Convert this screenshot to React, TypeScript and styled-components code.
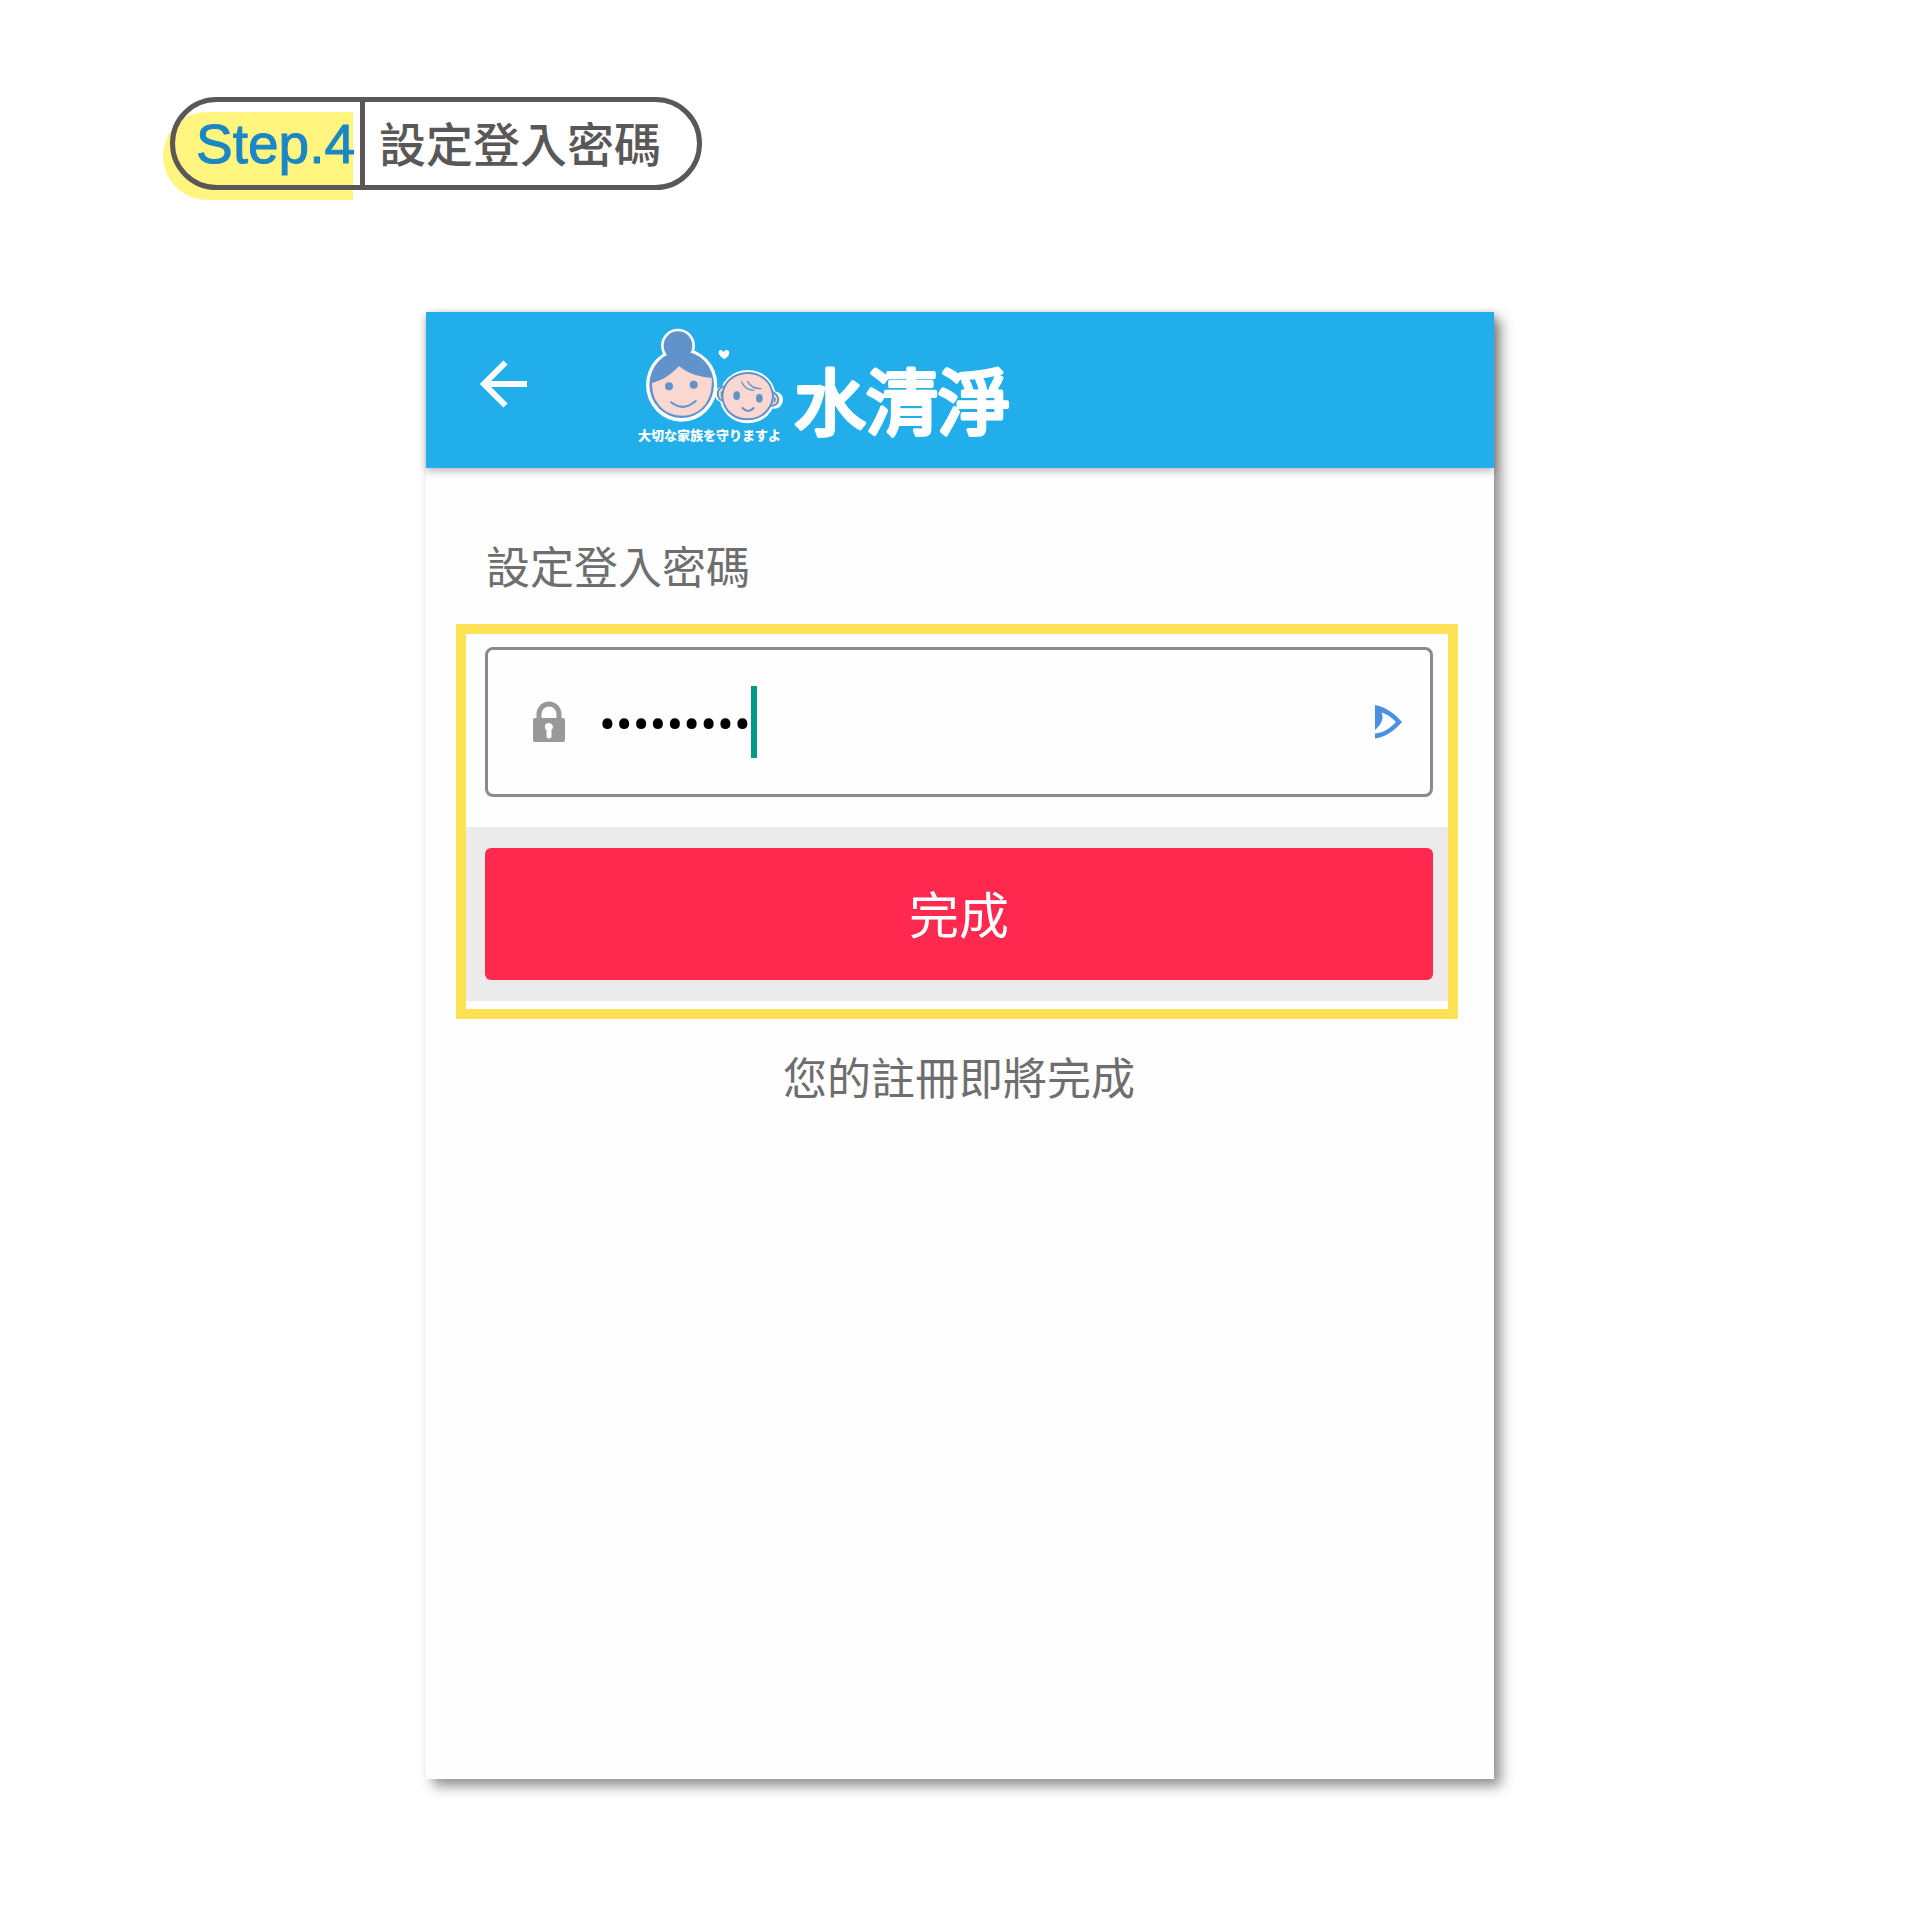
import React, { useState } from "react";
import styled, { createGlobalStyle } from "styled-components";

const cjk = `"Noto Sans CJK TC", "Noto Sans", sans-serif`;

const GlobalStyle = createGlobalStyle`
  *, *::before, *::after { box-sizing: border-box; }
  body { margin: 0; background: #fff; font-family: ${cjk}; }
`;

const Page = styled.main`
  display: flex;
  flex-direction: column;
  min-height: 100vh;
  padding: 97px 24px 151px;
`;

const StepBadge = styled.h1`
  position: relative;
  display: flex;
  align-self: flex-start;
  height: 93px;
  margin: 0 0 122px 146px;
  border: 5px solid #595757;
  border-radius: 47px;
  font-size: 47px;
  font-weight: 500;
  line-height: 80px;
  color: #595757;

  &::before {
    content: "";
    position: absolute;
    z-index: -1;
    top: 10px;
    left: -12px;
    width: 190px;
    height: 88px;
    border-radius: 44px 0 0 44px;
    background: #fff57f;
  }
`;

const StepNumber = styled.span`
  padding: 0 5px 0 21px;
  border-right: 5px solid #595757;
  font-family: "Liberation Sans", Arial, sans-serif;
  font-size: 55px;
  font-weight: 400;
  line-height: 84px;
  color: #1b86c6;
  -webkit-text-stroke: 1px #1b86c6;
`;

const StepTitle = styled.span`
  padding: 0 36px 0 14px;
`;

const Screen = styled.section`
  display: flex;
  flex: 1;
  flex-direction: column;
  width: 100%;
  max-width: 1068px;
  margin: 0 auto;
  background: #fefefe;
  box-shadow: 7px 7px 12px rgba(0, 0, 0, 0.44);
`;

const AppBar = styled.header`
  display: flex;
  align-items: center;
  height: 156px;
  padding: 0 48px 12px;
  background: #22aeeb;
  box-shadow: 0 3px 8px rgba(0, 0, 0, 0.28);
`;

const BackButton = styled.button`
  display: flex;
  padding: 0;
  border: 0;
  background: none;
  cursor: pointer;
`;

const Brand = styled.div`
  display: flex;
  align-items: flex-end;
  margin-left: 110px;
  color: #fff;
`;

const BrandMark = styled.div`
  display: flex;
  flex-direction: column;
  gap: 2px;
`;

const Tagline = styled.span`
  font-family: "Noto Sans CJK JP", sans-serif;
  font-size: 13px;
  font-weight: 900;
  line-height: 16px;
`;

const Wordmark = styled.svg`
  margin: 0 0 -8px 8px;
  overflow: visible;
  fill: #fff;
  stroke: #fff;
  stroke-width: 4px;
  stroke-linejoin: round;
  font-family: ${cjk};
  font-size: 72px;
  font-weight: 400;
`;

const Form = styled.form`
  display: flex;
  flex-direction: column;
  padding: 65px 36px 0 30px;
`;

const FieldLabel = styled.label`
  padding-left: 30px;
  font-size: 44px;
  line-height: 64px;
  color: #6e6e6e;
`;

const Highlight = styled.div`
  margin-top: 27px;
  padding: 13px 0 8px;
  border: 10px solid #ffe155;
`;

const Field = styled.div`
  display: flex;
  align-items: center;
  height: 150px;
  margin: 0 15px 30px 19px;
  padding: 0 28px 0 45px;
  border: 3px solid #8b8b8b;
  border-radius: 8px;
`;

const PasswordInput = styled.input`
  field-sizing: content;
  min-width: 20px;
  margin-left: 34px;
  padding: 5px 0 0;
  border: 0;
  outline: 0;
  background: none;
  font-family: Roboto, sans-serif;
  font-size: 50px;
  line-height: 72px;
  color: #000;
`;

const Caret = styled.span`
  width: 6px;
  height: 72px;
  background: #009a87;
`;

const RevealButton = styled(BackButton)`
  margin-left: auto;
`;

const Actions = styled.div`
  padding: 21px 15px 21px 19px;
  background: #ebebeb;
`;

const SubmitButton = styled.button`
  display: block;
  width: 100%;
  height: 132px;
  padding: 0 0 4px;
  border: 0;
  border-radius: 6px;
  background: #ff284f;
  font-family: ${cjk};
  font-size: 50px;
  line-height: 72px;
  color: #fff;
  cursor: pointer;
`;

const Hint = styled.p`
  margin: 25px 0 0;
  padding-left: 4px;
  font-size: 44px;
  line-height: 64px;
  text-align: center;
  color: #6e6e6e;
`;

const ArrowIcon = () => (
  <svg width="54" height="54" viewBox="0 0 54 54" fill="none" stroke="#fff" strokeWidth="6" aria-hidden="true">
    <path d="M53 27H10M31.500 5.500 10 27l21.500 21.500" />
  </svg>
);

const FamilyLogo = () => (
  <svg width="145" height="99" viewBox="55 48 435 297" aria-hidden="true">
    <g fill="#fff">
      <circle cx="175" cy="107" r="51" />
      <ellipse cx="186" cy="225" rx="107" ry="110" />
      <ellipse cx="384" cy="260" rx="84" ry="80" />
      <circle cx="308" cy="253" r="23" />
      <circle cx="464" cy="270" r="26" />
      <path d="M297 124c4-6 11-5 14 3 5-9 13-9 17-3 4 10-6 19-13 23-8-2-19-11-18-23Z" />
    </g>
    <g fill="#6093cb">
      <circle cx="175" cy="107" r="43" />
      <path d="M145 120h60v40h-60z" />
      <ellipse cx="186" cy="224" rx="97" ry="100" />
    </g>
    <path
      fill="#fad7d0"
      d="M97 219C130 210 153 195 178 168c28 23 62 34 98 35 6 66-32 113-88 114-54 0-92-40-91-98Z"
    />
    <g fill="#fad7d0" stroke="#6093cb" strokeWidth="6">
      <path d="M318 229c-13-1-24 9-24 22 0 15 10 23 23 21M451 245c14 1 25 11 25 24 0 12-11 20-27 19" />
      <path d="M384 189c37 0 67 23 74 56 4 12 1 32-6 43-14 25-40 40-70 40-34 0-62-20-71-52-4-14-3-33 4-46 12-25 38-41 69-41Z" />
    </g>
    <path fill="#6093cb" d="M303 243q13 10 1 20zM463 260q12 10-1 19z" />
    <g fill="#6093cb">
      <circle cx="148" cy="229" r="12" />
      <circle cx="222" cy="224" r="12" />
      <ellipse cx="351" cy="257" rx="10" ry="13" />
      <ellipse cx="419" cy="265" rx="10" ry="13" />
    </g>
    <g fill="none" stroke="#6093cb" strokeWidth="6" strokeLinecap="round">
      <path d="M154 277q37 29 74-4M369 294q16 18 33 0" />
      <path strokeWidth="4" d="M366 216q11 24 36 25M384 215q13 22 40 21" />
    </g>
  </svg>
);

const LockIcon = () => (
  <svg width="32" height="42" viewBox="0 0 32 42" aria-hidden="true">
    <path d="M6 19v-6a10 10 0 0 1 20 0v6" fill="none" stroke="#999" strokeWidth="5" />
    <rect y="17" width="32" height="24" rx="2" fill="#999" />
    <path d="M12 27a4 4 0 1 1 6.500 2v6a2.500 2.500 0 0 1-5 0v-6q-1.500-.5-1.500-2Z" fill="#fff" />
  </svg>
);

const EyeIcon = () => (
  <svg width="27" height="34" viewBox="0 0 27 34" aria-hidden="true">
    <path
      fill="#4a90e2"
      fillRule="evenodd"
      d="M0 0c11 2 19 8 27 17C19 26 11 32 0 33.500v-5C9 28 15 23 21 17 17 13 12 9 6.500 7.500 9 13 7 19 0 25Z"
    />
  </svg>
);

export default function App() {
  const [password, setPassword] = useState("shuiqing1");
  const [visible, setVisible] = useState(false);

  return (
    <>
      <GlobalStyle />
      <Page>
        <StepBadge>
          <StepNumber>Step.4</StepNumber>
          <StepTitle>設定登入密碼</StepTitle>
        </StepBadge>
        <Screen>
          <AppBar>
            <BackButton type="button" aria-label="返回">
              <ArrowIcon />
            </BackButton>
            <Brand>
              <BrandMark>
                <FamilyLogo />
                <Tagline>大切な家族を守りますよ</Tagline>
              </BrandMark>
              <Wordmark width="224" height="125" viewBox="0 0 224 125">
                <text x="3" y="103">水清淨</text>
              </Wordmark>
            </Brand>
          </AppBar>
          <Form onSubmit={(event) => event.preventDefault()}>
            <FieldLabel htmlFor="password">設定登入密碼</FieldLabel>
            <Highlight>
              <Field>
                <LockIcon />
                <PasswordInput
                  id="password"
                  type={visible ? "text" : "password"}
                  value={password}
                  onChange={(event) => setPassword(event.target.value)}
                />
                <Caret />
                <RevealButton type="button" aria-label="顯示密碼" onClick={() => setVisible(!visible)}>
                  <EyeIcon />
                </RevealButton>
              </Field>
              <Actions>
                <SubmitButton type="submit">完成</SubmitButton>
              </Actions>
            </Highlight>
            <Hint>您的註冊即將完成</Hint>
          </Form>
        </Screen>
      </Page>
    </>
  );
}
